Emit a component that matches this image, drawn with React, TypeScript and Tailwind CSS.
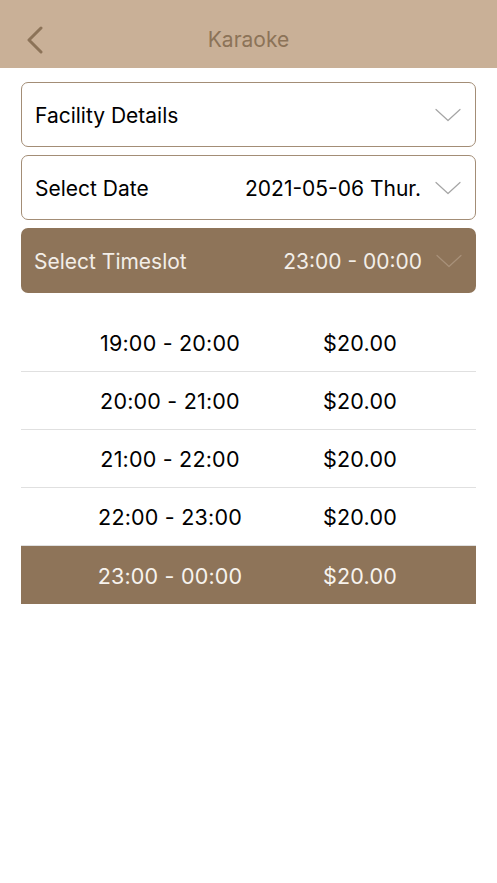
const slots = [
  { time: '19:00 - 20:00', price: '$20.00' },
  { time: '20:00 - 21:00', price: '$20.00' },
  { time: '21:00 - 22:00', price: '$20.00' },
  { time: '22:00 - 23:00', price: '$20.00' },
  { time: '23:00 - 00:00', price: '$20.00' },
]
const selected = 4

function DownChevron({ className }: { className?: string }) {
  return (
    <svg width="26" height="14" viewBox="0 0 26 14" fill="none" className={className}>
      <path d="M1 1.5 L13 12.5 L25 1.5" stroke="currentColor" strokeWidth="1.2" strokeLinecap="round" strokeLinejoin="round" />
    </svg>
  )
}

export default function App() {
  return (
    <div className="w-[497px] h-[883px] bg-white" style={{ fontFamily: 'Inter, "Noto Sans", sans-serif' }}>
      {/* Nav bar */}
      <div className="h-[68px] bg-[#c9b097] flex items-end pb-[14px] relative">
        <svg width="20" height="28" viewBox="0 0 20 28" fill="none" className="absolute left-[25px] top-[26px] text-[#8c7358]">
          <path d="M16 2 L4 14 L16 26" stroke="currentColor" strokeWidth="3" strokeLinecap="round" strokeLinejoin="round" />
        </svg>
        <div className="w-full text-center text-[21px] text-[#8c7358] leading-[28px]">Karaoke</div>
      </div>

      <div className="px-[21px] pt-[14px] flex flex-col gap-[8px]">
        <div className="h-[65px] rounded-[7px] border border-[#a38d76] flex items-center pl-[13px] pr-[14px]">
          <span className="text-[21px] text-black flex-1 pt-[3px]">Facility Details</span>
          <DownChevron className="text-[#a5a5a5]" />
        </div>
        <div className="h-[65px] rounded-[7px] border border-[#a38d76] flex items-center pl-[13px] pr-[14px]">
          <span className="text-[21px] text-black flex-1 pt-[2px]">Select Date</span>
          <span className="text-[21px] text-black mr-[14px] pt-[2px]">2021-05-06 Thur.</span>
          <DownChevron className="text-[#a5a5a5]" />
        </div>
        <div className="h-[65px] rounded-[7px] bg-[#8e7459] flex items-center pl-[13px] pr-[14px]">
          <span className="text-[21px] text-[#f3eee8] flex-1 pt-[2px]">Select Timeslot</span>
          <span className="text-[21px] text-[#f3eee8] mr-[14px] pt-[2px]">23:00 - 00:00</span>
          <DownChevron className="text-[#a8917a]" />
        </div>
      </div>

      <div className="px-[21px] pt-[21px]">
        {slots.map((s, i) => (
          <div
            key={s.time}
            className={
              i === selected
                ? 'h-[58px] bg-[#8e7459] flex items-center pl-[34px] pt-[2px] text-[#f7f3ee]'
                : 'h-[58px] border-b border-[#e0e0e0] flex items-center pl-[34px] pt-[1px] text-black'
            }
          >
            <span className="w-[230px] text-center text-[21.5px] tracking-[0.2px]">{s.time}</span>
            <span className="w-[150px] text-center text-[21.5px] tracking-[0.2px]">{s.price}</span>
          </div>
        ))}
      </div>
    </div>
  )
}
